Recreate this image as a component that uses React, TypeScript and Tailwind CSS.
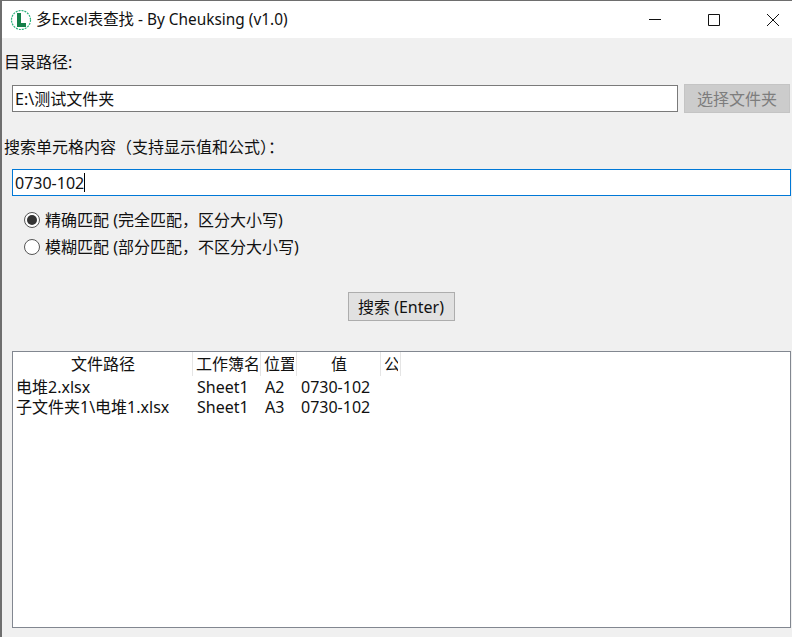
const font = { fontFamily: '"Noto Sans", "Noto Sans CJK SC", sans-serif' };

function Radio({ checked, label }: { checked?: boolean; label: string }) {
  return (
    <div className="flex h-[27px] items-center">
      <span className="flex h-[16px] w-[16px] items-center justify-center rounded-full border border-[#555] bg-white">
        {checked && <span className="h-[10px] w-[10px] rounded-full bg-[#333]" />}
      </span>
      <span className="ml-[5px] whitespace-nowrap">{label}</span>
    </div>
  );
}

const columns = [
  { name: "文件路径", width: "w-[180px]", center: true },
  { name: "工作簿名", width: "w-[68px]" },
  { name: "位置", width: "w-[36px]" },
  { name: "值", width: "w-[84px]", center: true },
  { name: "公", width: "w-[20px]" },
];

const rows = [
  ["电堆2.xlsx", "Sheet1", "A2", "0730-102"],
  ["子文件夹1\\电堆1.xlsx", "Sheet1", "A3", "0730-102"],
];

export default function App() {
  return (
    <div
      className="h-[637px] w-[792px] overflow-hidden border-t border-l-2 border-[#6e6e6e] bg-[#f0f0f0] text-[16px] leading-[20px] text-[#111]"
      style={font}
    >
      {/* Title bar */}
      <div className="flex h-[37px] items-center bg-white">
        <svg width="22" height="22" viewBox="0 0 22 22" className="ml-[8px]">
          <circle cx="11" cy="11" r="9.5" fill="#fff" stroke="#2bb27c" strokeWidth="1.2" strokeDasharray="2 1" />
          <path d="M7 4h4v10h5v4H7z" fill="#14804a" />
        </svg>
        <span className="ml-[4px] flex-1 text-[15.4px]">多Excel表查找 - By Cheuksing (v1.0)</span>
        <svg width="14" height="14" viewBox="0 0 14 14" className="mr-[45px]" fill="none" stroke="#111">
          <path d="M1 6.5h12" />
        </svg>
        <svg width="14" height="14" viewBox="0 0 14 14" className="mr-[45px]" fill="none" stroke="#111">
          <path d="M1.5 1.5h11v11h-11z" />
        </svg>
        <svg width="14" height="14" viewBox="0 0 14 14" className="mr-[12px]" fill="none" stroke="#111">
          <path d="M1 1l12 12M13 1L1 13" />
        </svg>
      </div>

      {/* Directory */}
      <div className="pl-[2px] pt-[14px]">目录路径:</div>
      <div className="mt-[12px] flex h-[29px] items-center pl-[10px]">
        <div className="flex h-[27px] w-[666px] items-center border border-[#7a7a7a] bg-white pl-[2px]">E:\测试文件夹</div>
        <button className="ml-[6px] h-[29px] w-[106px] border border-[#c4c4c4] bg-[#cccccc] text-[#7d7d7d]">选择文件夹</button>
      </div>

      {/* Search */}
      <div className="pl-[2px] pt-[24px]">搜索单元格内容（支持显示值和公式）：</div>
      <div className="mt-[12px] pl-[10px]">
        <div className="flex h-[27px] w-[779px] items-center border border-[#0078d7] bg-white pl-[2px]">
          0730-102
          <span className="h-[19px] w-px bg-black" />
        </div>
      </div>

      <div className="pl-[22px] pt-[10px]">
        <Radio checked label="精确匹配 (完全匹配，区分大小写)" />
        <Radio label="模糊匹配 (部分匹配，不区分大小写)" />
      </div>

      <div className="flex justify-center pl-[8px] pt-[32px]">
        <button className="h-[29px] w-[107px] border border-[#adadad] bg-[#e1e1e1]">搜索 (Enter)</button>
      </div>

      {/* Results */}
      <div className="ml-[10px] mt-[30px] h-[277px] w-[779px] border border-[#828790] bg-white">
        <div className="flex h-[24px]">
          {columns.map((c) => (
            <div key={c.name} className={`${c.width} shrink-0 border-r border-[#e5e5e5] pl-[3px] leading-[24px]`}>
              <div className={`mr-[2px] overflow-hidden whitespace-nowrap ${c.center ? "text-center" : ""}`}>{c.name}</div>
            </div>
          ))}
        </div>
        <div className="pt-[1px]">
          {rows.map((r) => (
            <div key={r[0]} className="flex h-[20px] items-center whitespace-nowrap">
              <div className="w-[180px] pl-[3px]">{r[0]}</div>
              <div className="w-[68px] pl-[4px]">{r[1]}</div>
              <div className="w-[36px] pl-[4px]">{r[2]}</div>
              <div className="w-[84px] pl-[4px]">{r[3]}</div>
            </div>
          ))}
        </div>
      </div>
    </div>
  );
}
